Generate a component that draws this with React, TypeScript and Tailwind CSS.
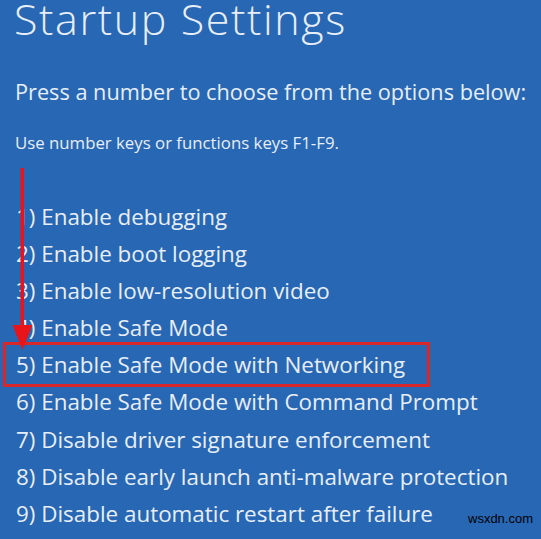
import React, { FC } from "react";

const options: string[] = [
  "1) Enable debugging",
  "2) Enable boot logging",
  "3) Enable low-resolution video",
  "4) Enable Safe Mode",
  "5) Enable Safe Mode with Networking",
  "6) Enable Safe Mode with Command Prompt",
  "7) Disable driver signature enforcement",
  "8) Disable early launch anti-malware protection",
  "9) Disable automatic restart after failure",
];

const App: FC = () => {
  return (
    <div
      className="relative h-[539px] w-[541px] overflow-hidden bg-[#2767b4] text-[#e8eef7]"
      style={{ fontFamily: '"Open Sans", "Noto Sans", sans-serif' }}
    >
      <div className="flex flex-col pl-[14px]">
        <h1 className="mt-[-3px] text-[43px] font-light leading-none tracking-[1.6px]">
          Startup Settings
        </h1>
        <p className="mt-[41px] pl-[1px] text-[21.7px] leading-none">
          Press a number to choose from the options below:
        </p>
        <p className="mt-[32px] pl-[1px] text-[16.8px] leading-none">
          Use number keys or functions keys F1-F9.
        </p>
        <ul className="mt-[46px] flex flex-col pl-[2px]">
          {options.map((opt) => (
            <li key={opt} className="h-[37.2px] text-[22.4px] leading-[37.2px]">
              {opt}
            </li>
          ))}
        </ul>
      </div>

      {/* highlight box round option 5 */}
      <div className="absolute left-[3px] top-[342px] h-[45px] w-[427px] border-[3px] border-[#d8262a]" />

      {/* arrow */}
      <svg
        className="absolute left-0 top-0"
        width="60"
        height="360"
        viewBox="0 0 60 360"
      >
        <rect x="20.5" y="168" width="3.5" height="160" fill="#e8141a" />
        <polygon points="12.5,325 32.5,325 22.5,350" fill="#e8141a" />
      </svg>

      <span
        className="absolute left-[468px] top-[509px] text-[13px] text-black"
        style={{ fontFamily: '"Liberation Sans", Arial, sans-serif' }}
      >
        wsxdn.com
      </span>
    </div>
  );
};

export default App;
